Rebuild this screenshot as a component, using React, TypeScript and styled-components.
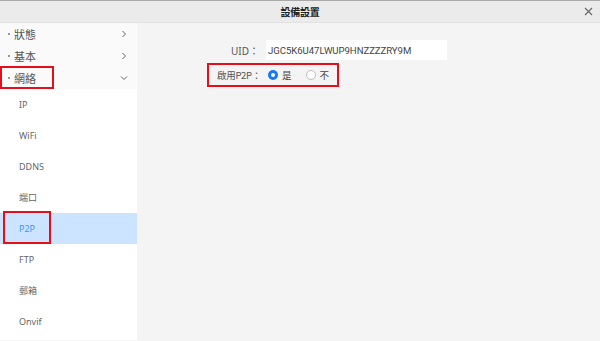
import React from "react";
import styled, { createGlobalStyle } from "styled-components";

const Global = createGlobalStyle`
  html, body { margin: 0; padding: 0; width: 600px; height: 341px; overflow: hidden; background: #f4f4f4; }
  body { font-family: "Noto Sans", "Noto Sans CJK TC", sans-serif; }
  #root { width: 600px; height: 341px; }
`;

const Page = styled.div`
  width: 600px;
  height: 341px;
  display: flex;
  flex-direction: column;
  border-top: 1px solid #a9a9a9;
  box-sizing: border-box;
  background: #f4f4f4;
`;

const Header = styled.div`
  height: 21px;
  flex: none;
  background: #ebebeb;
  display: flex;
  align-items: center;
  justify-content: center;
  position: relative;
  border-bottom: 1px solid #e2e2e2;
`;

const Title = styled.div`
  font-family: "Noto Sans CJK TC", sans-serif;
  font-weight: 700;
  font-size: 10px;
  color: #222;
  letter-spacing: -0.3px;
`;

const Close = styled.div`
  position: absolute;
  right: 7px;
  top: 6px;
  width: 9px;
  height: 9px;
  display: flex;
`;

const Body = styled.div`
  flex: 1;
  display: flex;
  min-height: 0;
`;

const Sidebar = styled.div`
  width: 137px;
  flex: none;
  background: #fff;
  display: flex;
  flex-direction: column;
  height: 317px;
`;

const MainItem = styled.div`
  height: 22px;
  display: flex;
  align-items: center;
  padding: 0 9px 0 8px;
  background: #fafafa;
  position: relative;
  font-family: "Noto Sans CJK TC", sans-serif;
  font-size: 11px;
  color: #555;
`;

const Dot = styled.span`
  display: inline-block;
  width: 2px;
  height: 2px;
  border-radius: 1px;
  background: #777;
  margin-right: 4px;
`;

const Label = styled.span`
  flex: 1;
`;

const Chevron = styled.svg`
  width: 8px;
  height: 8px;
`;

const SubItem = styled.div<{ $active?: boolean }>`
  height: 31px;
  display: flex;
  align-items: center;
  padding-left: 19px;
  position: relative;
  background: ${(p) => (p.$active ? "#cce4ff" : "#fff")};
  color: ${(p) => (p.$active ? "#3a97f0" : "#666")};
  font-family: "Noto Sans", "Noto Sans CJK TC", sans-serif;
  font-size: 9px;
`;

const Mark = styled.div<{ $l: number; $t: number; $w: number; $h: number }>`
  position: absolute;
  left: ${(p) => p.$l}px;
  top: ${(p) => p.$t}px;
  width: ${(p) => p.$w}px;
  height: ${(p) => p.$h}px;
  border: 2px solid #e3101c;
  box-sizing: border-box;
  pointer-events: none;
`;

const Content = styled.div`
  flex: 1;
  padding: 17px 0 0 70px;
  display: flex;
  flex-direction: column;
  align-items: flex-start;
  font-family: "Noto Sans CJK TC", sans-serif;
  font-size: 10px;
  color: #555;
`;

const FormRow = styled.div`
  display: flex;
  align-items: center;
  height: 20px;
`;

const FieldLabel = styled.div`
  width: 52px;
  text-align: right;
  white-space: nowrap;
  font-family: "Noto Sans", "Noto Sans CJK TC", sans-serif;
  font-size: 10px;
  color: #555;
`;

const Input = styled.div`
  margin-left: 7px;
  width: 181px;
  height: 20px;
  background: #fff;
  display: flex;
  align-items: center;
  padding-left: 2px;
  box-sizing: border-box;
  font-family: Roboto, sans-serif;
  font-size: 9.6px;
  color: #444;
  letter-spacing: -0.05px;
`;

const BoxedRow = styled.div`
  margin-top: 3px;
  border: 2px solid #e3101c;
  height: 24px;
  width: 132px;
  box-sizing: border-box;
  display: flex;
  align-items: center;
  padding-left: 8px;
`;

const P2PLabel = styled.div`
  flex: none;
  font-family: "Noto Sans CJK TC", sans-serif;
  font-size: 9.5px;
  color: #555;
  white-space: nowrap;
  width: 51px;
  letter-spacing: -0.3px;
`;

const RadioGroup = styled.div`
  display: flex;
  align-items: center;
  flex: none;
`;

const Radio = styled.span<{ $on?: boolean }>`
  flex: none;
  width: 10px;
  height: 10px;
  border-radius: 50%;
  box-sizing: border-box;
  border: ${(p) => (p.$on ? "3px solid #1677ff" : "1px solid #bdbdbd")};
  background: #fff;
  margin-right: 4px;
`;

const RadioText = styled.span`
  font-family: "Noto Sans CJK TC", sans-serif;
  font-size: 9.5px;
  color: #444;
  margin-right: 14px;
`;

const mainItems = ["狀態", "基本", "網絡"];
const subItems = ["IP", "WiFi", "DDNS", "端口", "P2P", "FTP", "郵箱", "Onvif"];

export default function App() {
  return (
    <Page>
      <Global />
      <Header>
        <Title>設備設置</Title>
        <Close>
          <svg width="9" height="9" viewBox="0 0 9 9">
            <path d="M1 1L8 8M8 1L1 8" stroke="#666" strokeWidth="1.1" />
          </svg>
        </Close>
      </Header>
      <Body>
        <Sidebar>
          {mainItems.map((m, i) => (
            <MainItem key={m}>
              <Dot />
              <Label>{m}</Label>
              {i < 2 ? (
                <Chevron viewBox="0 0 8 8">
                  <path d="M2.5 1L5.5 4L2.5 7" stroke="#666" strokeWidth="1" fill="none" />
                </Chevron>
              ) : (
                <Chevron viewBox="0 0 8 8">
                  <path d="M1 2.5L4 5.5L7 2.5" stroke="#666" strokeWidth="1" fill="none" />
                </Chevron>
              )}
              {i === 2 && <Mark $l={0} $t={-1} $w={54} $h={23} />}
            </MainItem>
          ))}
          {subItems.map((s) => (
            <SubItem key={s} $active={s === "P2P"}>
              {s}
              {s === "P2P" && <Mark $l={3} $t={-2} $w={48} $h={33} />}
            </SubItem>
          ))}
        </Sidebar>
        <Content>
          <FormRow>
            <FieldLabel>UID：</FieldLabel>
            <Input>JGC5K6U47LWUP9HNZZZZRY9M</Input>
          </FormRow>
          <BoxedRow>
            <P2PLabel>啟用P2P：</P2PLabel>
            <RadioGroup>
              <Radio $on />
              <RadioText>是</RadioText>
              <Radio />
              <RadioText>不</RadioText>
            </RadioGroup>
          </BoxedRow>
        </Content>
      </Body>
    </Page>
  );
}
